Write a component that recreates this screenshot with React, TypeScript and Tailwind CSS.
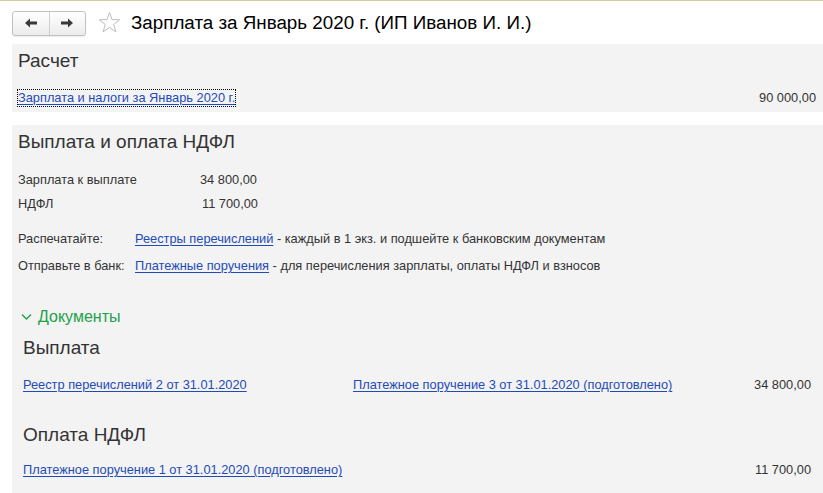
import React from "react";

const link = "text-[#1f4bb8] underline underline-offset-2 decoration-1";

export default function App() {
  return (
    <div className="w-[823px] h-[493px] overflow-hidden bg-white border-t border-[#d3cba0] text-[#333] text-[12.8px] leading-[16px]" style={{ fontFamily: '"Liberation Sans", Arial, sans-serif' }}>
      {/* header */}
      <div className="h-[43px] flex items-center pl-[12px] pt-[1px]">
        <div className="flex h-[25px] w-[74px] border border-[#c2c2c2] rounded-[3px] bg-gradient-to-b from-white to-[#ececec] shadow-[0_1px_1px_rgba(0,0,0,0.08)]">
          <div className="flex-1 flex items-center justify-center border-r border-[#cfcfcf]">
            <svg width="14" height="12" viewBox="0 0 14 12"><path d="M1 6 L6 1.5 L6 4.5 L13 4.5 L13 7.5 L6 7.5 L6 10.5 Z" fill="#3a3a3a" /></svg>
          </div>
          <div className="flex-1 flex items-center justify-center">
            <svg width="14" height="12" viewBox="0 0 14 12"><path d="M13 6 L8 1.5 L8 4.5 L1 4.5 L1 7.5 L8 7.5 L8 10.5 Z" fill="#3a3a3a" /></svg>
          </div>
        </div>
        <svg className="ml-[11px]" width="25" height="24" viewBox="0 0 24 24">
          <path d="M12 1.5 L14.6 8.6 L22.2 8.8 L16.2 13.5 L18.4 20.8 L12 16.5 L5.6 20.8 L7.8 13.5 L1.8 8.8 L9.4 8.6 Z" fill="none" stroke="#bdbdbd" strokeWidth="1" strokeLinejoin="round" />
        </svg>
        <div className="ml-[9px] text-[18.8px] text-black leading-none">Зарплата за Январь 2020 г. (ИП Иванов И. И.)</div>
      </div>

      {/* Расчет */}
      <div className="ml-[12px] h-[68px] bg-[#f3f3f3] pl-[6px] pr-[7px] pt-[6px]">
        <div className="text-[19px] leading-[22px]">Расчет</div>
        <div className="flex justify-between items-center mt-[18px]">
          <span className={link + " outline-1 outline-dotted outline-black"}>Зарплата и налоги за Январь 2020 г.</span>
          <span>90 000,00</span>
        </div>
      </div>

      {/* Выплата и оплата НДФЛ */}
      <div className="ml-[12px] mt-[13px] h-[400px] bg-[#f3f3f3] pl-[6px] pr-[12px] pt-[6px]">
        <div className="text-[19px] leading-[22px]">Выплата и оплата НДФЛ</div>
        <div className="mt-[19px] flex flex-col gap-[8px]">
          <div className="flex"><span className="w-[182px]">Зарплата к выплате</span><span>34 800,00</span></div>
          <div className="flex"><span className="w-[184px]">НДФЛ</span><span>11 700,00</span></div>
        </div>
        <div className="mt-[19px] flex flex-col gap-[11px]">
          <div className="flex"><span className="w-[117px]">Распечатайте:</span><span><span className={link}>Реестры перечислений</span> - каждый в 1 экз. и подшейте к банковским документам</span></div>
          <div className="flex"><span className="w-[117px]">Отправьте в банк:</span><span><span className={link}>Платежные поручения</span> - для перечисления зарплаты, оплаты НДФЛ и взносов</span></div>
        </div>
        <div className="mt-[34px] flex items-center text-[#22a04b] text-[16px] leading-[18px]">
          <svg className="ml-[3px] mr-[6px]" width="11" height="8" viewBox="0 0 11 8"><path d="M1 1.5 L5.5 6 L10 1.5" fill="none" stroke="#22a04b" strokeWidth="1.4" /></svg>
          Документы
        </div>
        <div className="pl-[5px]">
          <div className="mt-[11px] text-[19px] leading-[22px]">Выплата</div>
          <div className="mt-[18px] flex items-center">
            <span className={link + " w-[330px]"}>Реестр перечислений 2 от 31.01.2020</span>
            <span className={link}>Платежное поручение 3 от 31.01.2020 (подготовлено)</span>
            <span className="ml-auto">34 800,00</span>
          </div>
          <div className="mt-[31px] text-[19px] leading-[22px]">Оплата НДФЛ</div>
          <div className="mt-[16px] flex items-center">
            <span className={link}>Платежное поручение 1 от 31.01.2020 (подготовлено)</span>
            <span className="ml-auto">11 700,00</span>
          </div>
        </div>
      </div>
    </div>
  );
}
